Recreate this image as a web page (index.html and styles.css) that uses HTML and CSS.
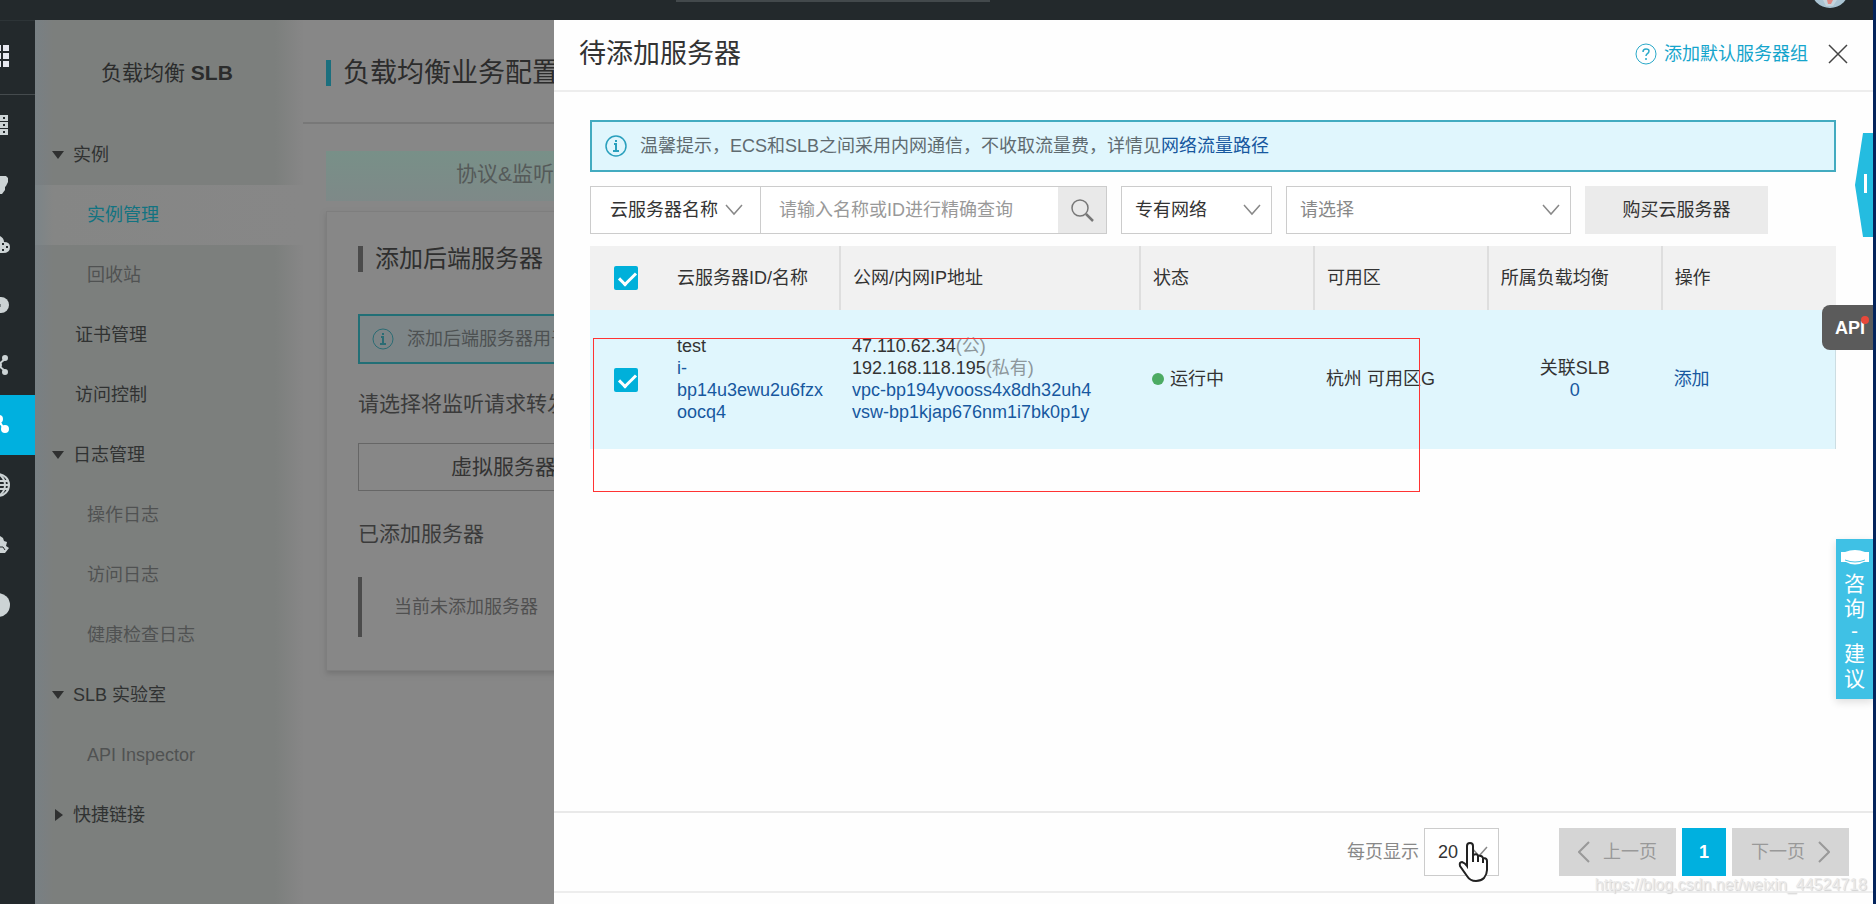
FILE: index.html
```html
<!DOCTYPE html>
<html lang="zh-CN">
<head>
<meta charset="utf-8">
<title>负载均衡 SLB</title>
<link rel="stylesheet" href="styles.css">
</head>
<body>
<div class="app">
  <header class="topbar">
    <div class="topbar-search"></div>
    <svg class="avatar" width="38" height="9" viewBox="0 0 38 9" aria-hidden="true"><circle cx="19" cy="-11" r="19" fill="#a9c3d2"/><path d="M12 0h14l-4 6h-7z" fill="#c3d3dc"/><path d="M16 0h6l-2 4h-3z" fill="#e08a84"/></svg>
  </header>

  <div class="body">
    <nav class="rail" aria-label="产品">
      <a class="rail-top" href="#" aria-label="全部产品"><svg width="10" height="24" viewBox="0 0 10 24" fill="#e6e8f0"><path d="M0 1h1v6H0zM3 1h6v6H3zM0 9h1v6H0zM3 9h6v6H3zM0 17h1v6H0zM3 17h6v6H3z"/></svg></a>
      <a class="rail-item" href="#" aria-label="服务器"><svg width="10" height="24" viewBox="0 0 10 24"><path d="M0 2h8v6H0zM0 9h8v6H0zM0 16h8v6H0z" fill="#ccd3d5"/><path d="M3 4h2v2H3zM3 11h2v2H3zM3 18h2v2H3z" fill="#23292c"/></svg></a>
      <a class="rail-item" href="#" aria-label="数据库"><svg width="10" height="24" viewBox="0 0 10 24"><path d="M0 3h6l2 2v4l-2 4-1 1v3l-3 4H0z" fill="#ccd3d5"/></svg></a>
      <a class="rail-item" href="#" aria-label="云存储"><svg width="10" height="24" viewBox="0 0 10 24"><path d="M0 3q4 2 4 6 6 0 6 5 0 6-7 6H0z" fill="#ccd3d5"/><path d="M2 10h2v2H2zM6 13h2v2H6zM2 16h2v2H2z" fill="#23292c"/></svg></a>
      <a class="rail-item" href="#" aria-label="安全"><svg width="10" height="24" viewBox="0 0 10 24"><circle cx="1" cy="12" r="8" fill="#ccd3d5"/><path d="M0 11h1v3H0z" fill="#7d8588"/></svg></a>
      <a class="rail-item" href="#" aria-label="网络"><svg width="10" height="24" viewBox="0 0 10 24" fill="#ccd3d5" stroke="#ccd3d5" stroke-width="2"><path d="M-2 12l7-6M-2 12l7 6" fill="none"/><circle cx="5" cy="5" r="2"/><circle cx="5" cy="19" r="2"/><circle cx="-1" cy="12" r="2"/></svg></a>
      <a class="rail-item active" href="#" aria-label="负载均衡"><svg width="10" height="24" viewBox="0 0 10 24" fill="#fff" stroke="#fff" stroke-width="2"><path d="M-3 4l7 12" fill="none"/><circle cx="-1" cy="6" r="3"/><circle cx="5" cy="16" r="3"/></svg></a>
      <a class="rail-item" href="#" aria-label="域名"><svg width="10" height="24" viewBox="0 0 10 24" fill="none" stroke="#ccd3d5" stroke-width="2"><circle cx="-2" cy="12" r="11"/><path d="M0 2q5 4 5 10t-5 10M0 8h8M0 16h8M0 12h9"/></svg></a>
      <a class="rail-item" href="#" aria-label="监控"><svg width="10" height="24" viewBox="0 0 10 24"><path d="M0 3l3 2 1 3 3 1-1 4 3 2-4 5H0z" fill="#ccd3d5"/><path d="M0 14h3l2 3" stroke="#23292c" fill="none"/></svg></a>
      <a class="rail-item" href="#" aria-label="更多"><svg width="10" height="24" viewBox="0 0 10 24"><circle cx="-2" cy="12" r="12" fill="#ccd3d5"/></svg></a>
    </nav>

    <aside class="side">
      <h2 class="side-title">负载均衡 <b>SLB</b></h2>
      <a class="nav group open" href="#">实例</a>
      <a class="nav sub selected" href="#">实例管理</a>
      <a class="nav sub" href="#">回收站</a>
      <a class="nav" href="#">证书管理</a>
      <a class="nav" href="#">访问控制</a>
      <a class="nav group open" href="#">日志管理</a>
      <a class="nav sub" href="#">操作日志</a>
      <a class="nav sub" href="#">访问日志</a>
      <a class="nav sub" href="#">健康检查日志</a>
      <a class="nav group open" href="#">SLB 实验室</a>
      <a class="nav sub" href="#">API Inspector</a>
      <a class="nav group" href="#">快捷链接</a>
    </aside>

    <main class="content">
      <div class="page-head"><h1 class="page-title">负载均衡业务配置</h1></div>
      <div class="step">协议&amp;监听</div>
      <section class="card">
        <h2 class="card-title">添加后端服务器</h2>
        <div class="card-tip">
          <svg width="22" height="22" viewBox="0 0 22 22" fill="none" stroke="#2b6c74"><circle cx="11" cy="11" r="10"/><path d="M11 5v2M9 9h2v7M8 16h6" stroke-width="2"/></svg>
          <span>添加后端服务器用于处理</span>
        </div>
        <h3 class="card-sub">请选择将监听请求转发至哪类</h3>
        <button class="group-btn" type="button">虚拟服务器组</button>
        <h3 class="card-sub">已添加服务器</h3>
        <p class="empty">当前未添加服务器</p>
      </section>
    </main>

    <section class="drawer" aria-label="待添加服务器">
      <header class="drawer-head">
        <h2 class="drawer-title">待添加服务器</h2>
        <a class="help" href="#"><svg width="22" height="22" viewBox="0 0 22 22" fill="none" stroke="#2aa9c9"><circle cx="11" cy="11" r="10"/><path d="M8 9q0-3 3-3t3 2q0 2-2 3-1 1-1 2M11 15v2" stroke-width="1.5"/></svg>添加默认服务器组</a>
        <button class="close" type="button" aria-label="关闭"><svg width="20" height="20" viewBox="0 0 20 20" stroke="#444" stroke-width="1.5"><path d="M1 1l18 18M19 1L1 19"/></svg></button>
      </header>

      <div class="drawer-body">
        <div class="tip">
          <svg width="22" height="22" viewBox="0 0 22 22" fill="none" stroke="#2aa0bd" stroke-width="1.5"><circle cx="11" cy="11" r="10"/><path d="M11 5v2M9 9h2v7M8 16h6" stroke-width="2"/></svg>
          <p>温馨提示，ECS和SLB之间采用内网通信，不收取流量费，详情见<a href="#">网络流量路径</a></p>
        </div>

        <form class="filters">
          <div class="combo">
            <label class="pick pick-name"><select aria-label="查询字段"><option>云服务器名称</option></select><svg width="18" height="12" viewBox="0 0 18 12"><path d="M1 1l8 9 8-9"/></svg></label>
            <input class="query" type="text" aria-label="查询" placeholder="请输入名称或ID进行精确查询">
            <button class="search" type="button" aria-label="搜索"><svg width="24" height="24" viewBox="0 0 24 24" fill="none" stroke="#777" stroke-width="1.5"><circle cx="10" cy="10" r="8"/><path d="M16 16l7 7" stroke-width="2.5"/></svg></button>
          </div>
          <label class="pick pick-net"><select aria-label="网络类型"><option>专有网络</option></select><svg width="18" height="12" viewBox="0 0 18 12"><path d="M1 1l8 9 8-9"/></svg></label>
          <label class="pick pick-vpc"><select aria-label="专有网络"><option>请选择</option></select><svg width="18" height="12" viewBox="0 0 18 12"><path d="M1 1l8 9 8-9"/></svg></label>
          <button class="buy" type="button">购买云服务器</button>
        </form>

        <table class="servers">
          <colgroup><col class="c-check"><col class="c-id"><col class="c-ip"><col><col><col><col></colgroup>
          <thead>
            <tr>
              <th class="check"><input type="checkbox" checked aria-label="全选"></th>
              <th>云服务器ID/名称</th><th>公网/内网IP地址</th><th>状态</th><th>可用区</th><th>所属负载均衡</th><th>操作</th>
            </tr>
          </thead>
          <tbody>
            <tr>
              <td class="check"><input type="checkbox" checked aria-label="选择 test"></td>
              <td class="id">test<br><a href="#">i-bp14u3ewu2u6fzxoocq4</a></td>
              <td>47.110.62.34<span class="muted">(公)</span><br>192.168.118.195<span class="muted">(私有)</span><br><a href="#">vpc-bp194yvooss4x8dh32uh4</a><br><a href="#">vsw-bp1kjap676nm1i7bk0p1y</a></td>
              <td><span class="dot"></span>运行中</td>
              <td>杭州 可用区G</td>
              <td class="mid">关联SLB<br><a href="#">0</a></td>
              <td><a href="#">添加</a></td>
            </tr>
          </tbody>
        </table>
      </div>

      <footer class="pager">
        <label class="size-label" for="size">每页显示</label>
        <span class="pick pick-size"><select id="size"><option>20</option></select><svg width="18" height="12" viewBox="0 0 18 12"><path d="M1 1l8 9 8-9"/></svg></span>
        <div class="pages">
          <button class="page" type="button" disabled><svg width="12" height="22" viewBox="0 0 12 22"><path d="M11 1L1 11l10 10"/></svg>上一页</button>
          <button class="page current" type="button">1</button>
          <button class="page" type="button" disabled>下一页<svg width="12" height="22" viewBox="0 0 12 22"><path d="M1 1l10 10L1 21"/></svg></button>
        </div>
      </footer>
      <div class="drawer-foot"></div>
    </section>
  </div>

  <button class="flag" type="button" aria-label="展开"><svg width="18" height="104" viewBox="0 0 18 104"><path d="M18 0H8L0 52l8 52h10z" fill="#24bce0"/><path d="M9 41h3v19H9z" fill="#fff"/></svg></button>
  <button class="api" type="button">API<span class="api-dot"></span></button>
  <button class="feedback" type="button">
    <svg width="28" height="16" viewBox="0 0 28 16"><path d="M0 3h4q10-4 20 0h4v10h-5q-9 5-18 0H0z" fill="#fff"/><path d="M4 11q10 4 20 0" fill="none" stroke="#49c3e4"/></svg>
    <span>咨</span><span>询</span><span class="dash">-</span><span>建</span><span>议</span>
  </button>
  <div class="marker"></div>
  <svg class="cursor" width="30" height="40" viewBox="0 0 30 40" aria-hidden="true"><path d="M9 24V4q0-3 3-3t3 3v9q4-2 5 1 4-1 5 2 4 0 4 3v9q0 4-3 8-3 3-8 3-6 0-9-5L2 24q-1-4 2-4 3 1 5 4z" fill="#fff" stroke="#222" stroke-width="2"/><path d="M15 12v8M20 14v6M25 16v5" stroke="#222" stroke-width="2"/></svg>
  <div class="watermark">https://blog.csdn.net/weixin_44524718</div>
</div>
</body>
</html>
```
FILE: styles.css
```css
* { box-sizing: border-box; }
body { margin: 0; font: 18px/22px "Liberation Sans", "Noto Sans CJK SC", sans-serif; color: #333; }
h1, h2, h3, p { margin: 0; font-weight: 400; }
a { color: #17589f; text-decoration: none; }
button, input, select { font: inherit; color: inherit; margin: 0; }
button { border: 0; padding: 0; background: none; }
svg { flex: none; }

.app { position: relative; display: flex; flex-direction: column; height: 100vh; overflow: hidden; border-right: 3px solid #04245c; background: #878787; }
.topbar { display: flex; flex: none; height: 20px; justify-content: space-between; align-items: flex-start; padding: 0 24px 0 676px; background: #23292c; }
.topbar-search { width: 314px; height: 2px; background: #43494c; }
.body { display: flex; flex: 1; min-height: 0; }

.rail { flex: none; width: 35px; background: #23292c; }
.rail-top, .rail-item { display: flex; align-items: center; height: 60px; }
.rail-top { height: 75px; padding-bottom: 4px; border-top: 1px solid #2d3437; border-bottom: 1px solid #454b4e; }
.rail-item.active { background: #00b0df; }

.side { flex: none; width: 268px; background: linear-gradient(90deg, #788084, #7b7f80 12px, #7c7f7d 18px, #7c7f7d 240px, #868686 266px); }
.side-title { height: 105px; padding: 38px 0 0 66px; font-size: 21px; line-height: 30px; color: #2b2c2c; }
.nav { position: relative; display: block; height: 60px; padding-left: 40px; line-height: 60px; color: #303232; }
.nav.group { padding-left: 38px; }
.nav.sub { padding-left: 52px; color: #505252; }
.nav.selected { color: #127381; background: linear-gradient(90deg, #7b8488, #858685 18px, #878787); }
.nav.group::before { content: ""; position: absolute; left: 20px; top: 24px; border: 6px solid transparent; border-left: 8px solid #2f3030; border-right: 0; }
.nav.open::before { left: 17px; top: 26px; border: 6px solid transparent; border-top: 8px solid #2f3030; border-bottom: 0; }

.content { flex: none; width: 700px; background: #878787; }
.page-head { height: 104px; padding: 40px 0 0 23px; border-bottom: 2px solid #787878; }
.page-title { padding-left: 12px; border-left: 5px solid #1b6f7e; font-size: 27px; line-height: 26px; color: #2c2c2c; }
.step { width: 350px; height: 50px; margin: 27px 0 0 23px; padding-left: 130px; line-height: 46px; font-size: 21px; color: #555a59; background: linear-gradient(180deg, #789088, #7e8988); }
.card { margin: 10px 0 0 23px; padding: 34px 31px 33px; border: 1px solid #7e7e7e; box-shadow: 0 3px 5px #757575; }
.card-title { padding-left: 12px; border-left: 5px solid #4b4b4b; font-size: 24px; line-height: 26px; color: #2f2f2f; }
.card-tip { display: flex; align-items: center; gap: 13px; height: 50px; margin-top: 42px; padding-left: 12px; border: 2px solid #226f76; background: #7d8587; color: #4d5152; }
.card-sub { margin: 27px 0 26px; font-size: 21px; line-height: 26px; color: #3b3b3b; }
.group-btn { display: block; width: 312px; height: 48px; border: 1px solid #666; font-size: 21px; color: #333; }
.group-btn + .card-sub { margin: 30px 0; }
.empty { height: 60px; padding-left: 32px; border-left: 4px solid #4b4b4b; line-height: 60px; color: #505050; }

.drawer { position: absolute; inset: 20px 0 0 554px; display: flex; flex-direction: column; background: #fefefe; }
.drawer-head { display: flex; flex: none; align-items: center; height: 72px; padding: 0 25px 3px; border-bottom: 2px solid #ededed; }
.drawer-title { flex: 1; font-size: 27px; line-height: 32px; }
.help { display: flex; align-items: center; gap: 7px; color: #15a5cc; }
.close { display: flex; margin-left: 20px; }
.drawer-body { flex: 1; padding: 28px 37px 0 36px; }

.tip { display: flex; align-items: center; gap: 13px; height: 52px; padding-left: 13px; border: 2px solid #43abc0; background: #e0f6fd; color: #5f6b70; }
.filters { display: flex; flex-wrap: wrap; gap: 14px; margin-top: 14px; }
.combo { display: flex; width: 517px; height: 48px; border: 1px solid #ccc; }
.pick { position: relative; display: block; height: 48px; border: 1px solid #ccc; }
.pick select { width: 100%; height: 100%; padding: 0 13px; border: 0; appearance: none; background: #fff; }
.pick svg { position: absolute; right: 10px; top: 17px; pointer-events: none; }
.pick path { fill: none; stroke: #888; stroke-width: 1.5; }
.pick-name { width: 170px; height: 46px; border-width: 0 1px 0 0; }
.pick-name select { padding-left: 19px; }
.pick-name svg { right: 17px; }
.query { flex: 1; min-width: 0; padding: 0 18px; border: 0; background: #fff; }
.query::placeholder { color: #999; opacity: 1; }
.search { display: flex; align-items: center; justify-content: center; width: 48px; background: #e9e9e9; }
.pick-net { width: 151px; }
.pick-vpc { width: 285px; }
.pick-vpc select { color: #888; }
.buy { width: 183px; height: 48px; background: #ebebeb; }

.servers { width: 100%; margin-top: 12px; border-collapse: collapse; table-layout: fixed; }
.c-check { width: 75px; }
.c-id { width: 175px; }
.c-ip { width: 300px; }
.servers th { height: 64px; padding: 0 12px; border-right: 2px solid #dedede; background: #f1f1f1; font-weight: 400; text-align: left; }
.servers td { height: 139px; padding: 0 12px 2px; background: #e0f6fd; line-height: 22px; }
.servers th.check, .servers th:last-child { border-right: 0; }
.servers .check { padding: 0 0 0 24px; }
.servers input { display: block; width: 24px; height: 24px; appearance: none; border-radius: 2px; background: #00b0da; }
.servers input::after { content: ""; display: block; width: 14px; height: 7px; margin: 6px 0 0 5px; border: solid #fff; border-width: 0 0 3px 3px; rotate: -45deg; }
.servers .id { overflow-wrap: anywhere; }
.servers .mid { text-align: center; }
.servers tbody tr { border-right: 1px solid #ccdde2; }
.muted { color: #8d979b; }
.dot { display: inline-block; width: 12px; height: 12px; margin-right: 6px; border-radius: 50%; background: #4cab63; }

.pager { display: flex; flex: none; align-items: center; justify-content: flex-end; height: 80px; padding-right: 24px; border-top: 2px solid #e9e9e9; color: #888; }
.pick-size { width: 75px; margin: 0 60px 0 5px; color: #333; }
.pages { display: flex; gap: 6px; }
.page { display: flex; align-items: center; justify-content: center; gap: 13px; width: 117px; height: 48px; background: #d5d5d5; color: #999; }
.page path { fill: none; stroke: #999; stroke-width: 2; }
.page.current { width: 44px; background: #00b0df; color: #fff; font-weight: 700; }
.drawer-foot { flex: none; height: 13px; border-top: 2px solid #ededed; }

.flag { position: absolute; right: 0; top: 133px; display: flex; }
.api { position: absolute; right: 0; top: 305px; width: 51px; height: 45px; padding-left: 13px; border-radius: 8px 0 0 8px; background: #5b5b5b; color: #fff; font-weight: 700; text-align: left; }
.api-dot { position: absolute; right: 4px; top: 11px; width: 8px; height: 8px; border-radius: 50%; background: #e8483a; }
.feedback { position: absolute; right: 0; top: 539px; display: flex; flex-direction: column; align-items: center; width: 37px; padding: 10px 0 8px; background: #3fc1e5; color: #fff; font-size: 21px; line-height: 25px; box-shadow: 0 3px 8px #ddd; }
.feedback svg { margin-bottom: 6px; }
.feedback .dash { line-height: 20px; }
.marker { position: absolute; left: 593px; top: 338px; width: 827px; height: 154px; border: 1px solid #f33; }
.cursor { position: absolute; right: 385px; top: 842px; }
.watermark { position: absolute; right: 6px; bottom: 8px; font-size: 16px; color: #eaeaea; text-shadow: 1px 1px 1px #d0d0d0; }
```
